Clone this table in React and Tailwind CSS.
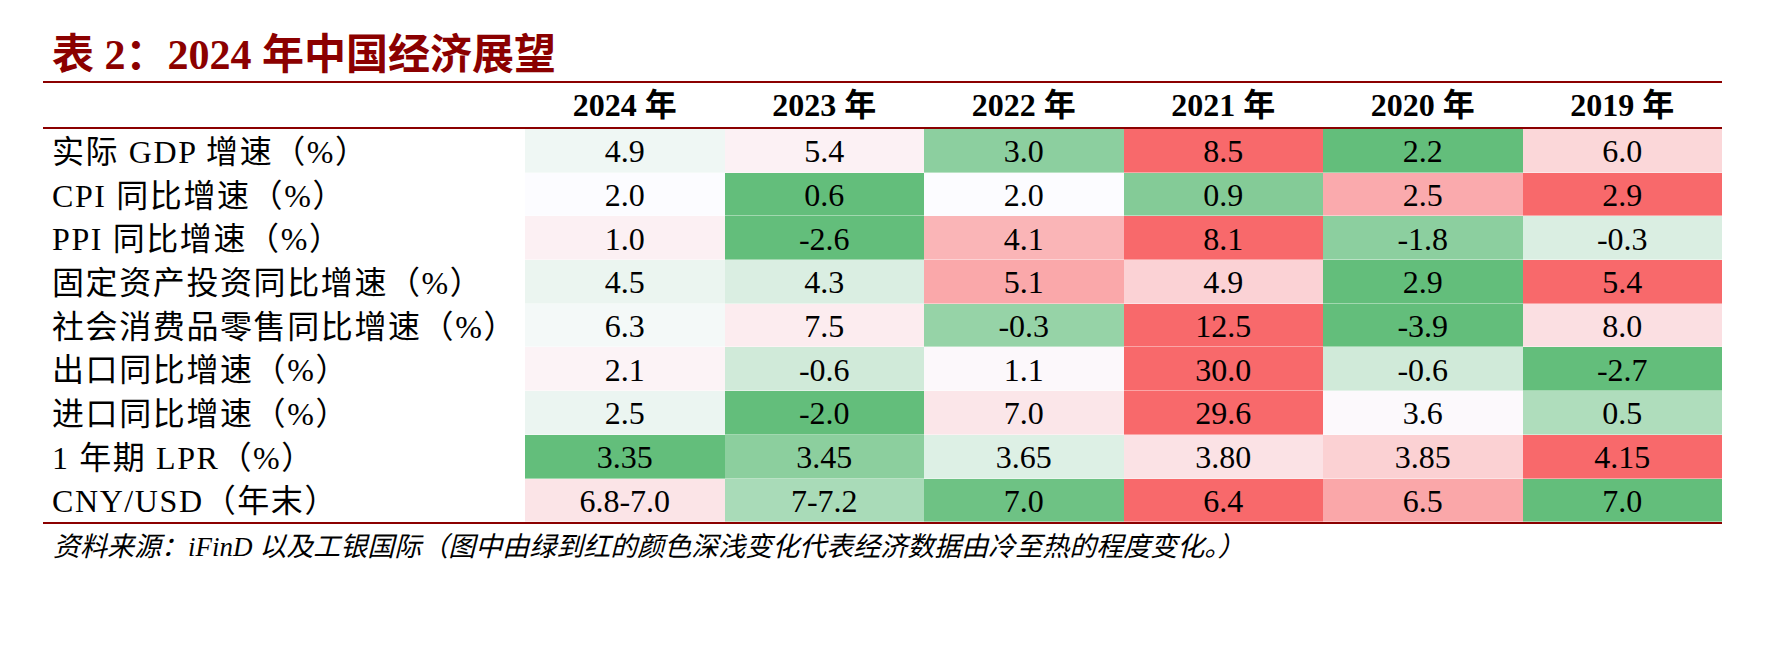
import React from "react";

const G = [99, 190, 123];
const W = [252, 252, 255];
const R = [248, 105, 107];

function mix(t) {
  const a = t < 0 ? G : R;
  const k = Math.min(1, Math.abs(t));
  return `rgb(${W.map((w, i) => Math.round(w + (a[i] - w) * k)).join(",")})`;
}

function scale(vals) {
  const s = [...vals].sort((a, b) => a - b);
  const n = s.length;
  const med = n % 2 ? s[(n - 1) / 2] : (s[n / 2 - 1] + s[n / 2]) / 2;
  const min = s[0];
  const max = s[n - 1];
  return vals.map((v) =>
    v < med ? -(med - v) / (med - min) : v > med ? (v - med) / (max - med) : 0
  );
}

const rows = [
  { label: "实际 GDP 增速（%）", vals: ["4.9", "5.4", "3.0", "8.5", "2.2", "6.0"] },
  { label: "CPI 同比增速（%）", vals: ["2.0", "0.6", "2.0", "0.9", "2.5", "2.9"] },
  { label: "PPI 同比增速（%）", vals: ["1.0", "-2.6", "4.1", "8.1", "-1.8", "-0.3"] },
  { label: "固定资产投资同比增速（%）", vals: ["4.5", "4.3", "5.1", "4.9", "2.9", "5.4"] },
  { label: "社会消费品零售同比增速（%）", vals: ["6.3", "7.5", "-0.3", "12.5", "-3.9", "8.0"] },
  { label: "出口同比增速（%）", vals: ["2.1", "-0.6", "1.1", "30.0", "-0.6", "-2.7"] },
  { label: "进口同比增速（%）", vals: ["2.5", "-2.0", "7.0", "29.6", "3.6", "0.5"] },
  { label: "1 年期 LPR（%）", vals: ["3.35", "3.45", "3.65", "3.80", "3.85", "4.15"] },
  {
    label: "CNY/USD（年末）",
    vals: ["6.8-7.0", "7-7.2", "7.0", "6.4", "6.5", "7.0"],
    t: [0.16, -0.54, -0.93, 1, 0.58, -1],
  },
];

const years = ["2024", "2023", "2022", "2021", "2020", "2019"];

const FONT = {
  fontFamily: '"Liberation Serif", "Noto Sans CJK SC", serif',
};

export default function App() {
  return (
    <div className="w-[1784px] h-[666px] bg-white text-black" style={FONT}>
      <div className="pl-[43px] w-[1722px]">
        <div className="h-[81px] flex items-end pl-[9px] pb-[1px]">
          <h1 className="text-[42px] leading-[50px] font-bold text-[#8b0000]">
            表 2：2024 年中国经济展望
          </h1>
        </div>

        <div className="grid grid-cols-[482px_repeat(6,199.5px)] h-[48px] border-t-2 border-b-2 border-[#8b0000] items-center">
          <div />
          {years.map((y) => (
            <div key={y} className="text-center text-[32px] font-bold leading-none">
              {y} 年
            </div>
          ))}
        </div>

        <div className="border-b-2 border-[#8b0000]">
          {rows.map((r) => {
            const ts = r.t || scale(r.vals.map(Number));
            return (
              <div
                key={r.label}
                className="grid grid-cols-[482px_repeat(6,199.5px)] h-[43.7px]"
              >
                <div className="pl-[9px] pt-[2px] flex items-center text-[32px] leading-none tracking-[1.6px] whitespace-nowrap">
                  {r.label}
                </div>
                {r.vals.map((v, i) => (
                  <div
                    key={i}
                    className="flex items-center justify-center pt-[2px] text-[32px] leading-none border-b border-white/40"
                    style={{ backgroundColor: mix(ts[i]) }}
                  >
                    {v}
                  </div>
                ))}
              </div>
            );
          })}
        </div>

        <div className="pl-[10px] pt-[5px] text-[27px] leading-[36px] italic whitespace-nowrap">
          资料来源：iFinD 以及工银国际（图中由绿到红的颜色深浅变化代表经济数据由冷至热的程度变化。）
        </div>
      </div>
    </div>
  );
}
